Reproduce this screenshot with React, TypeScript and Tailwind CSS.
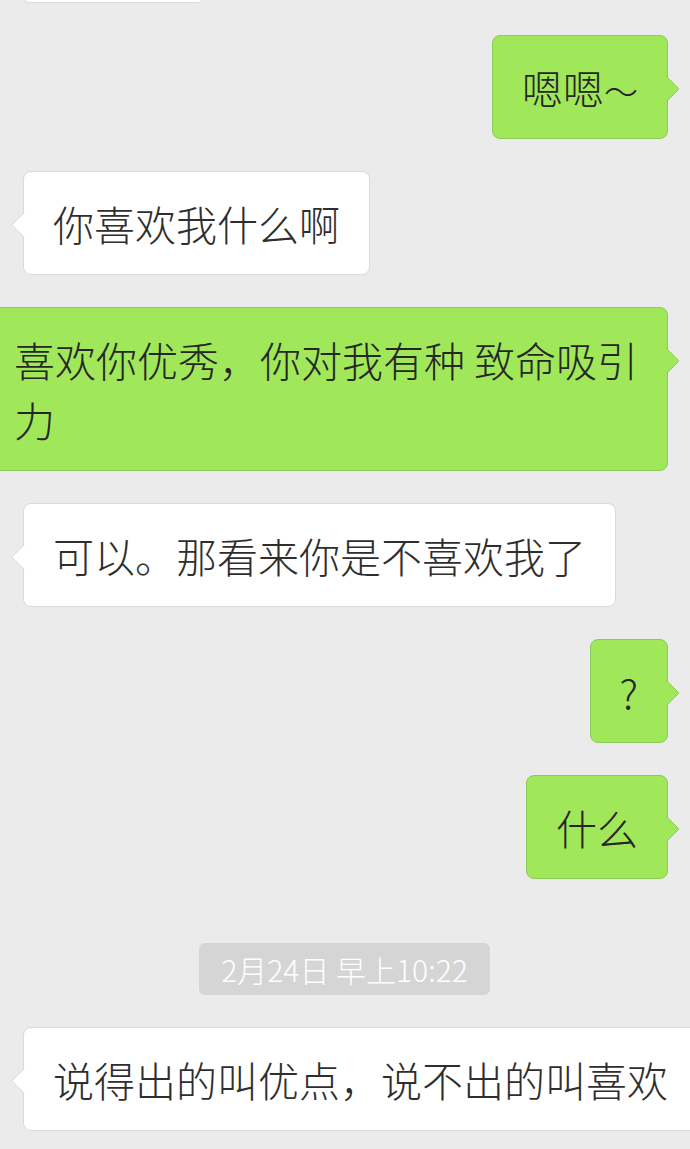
import React from "react"

const font = { fontFamily: '"Noto Sans CJK SC", "Noto Sans", sans-serif' }

function Tail({ side }: { side: "left" | "right" }) {
  if (side === "right") {
    return (
      <svg className="absolute top-[40px] left-[calc(100%-1px)]" width="14" height="26" viewBox="0 0 14 26">
        <path d="M0.5 0.5 L12.5 12.5 Q13 13 12.5 13.5 L0.5 25.5 Z" fill="#a0e75a" />
        <path d="M0.5 0.5 L12.5 12.5 Q13 13 12.5 13.5 L0.5 25.5" fill="none" stroke="#8ccb57" strokeWidth="1" />
      </svg>
    )
  }
  return (
    <svg className="absolute top-[40px] right-[calc(100%-1px)]" width="14" height="26" viewBox="0 0 14 26">
      <path d="M13.5 0.5 L1.5 12.5 Q1 13 1.5 13.5 L13.5 25.5 Z" fill="#ffffff" />
      <path d="M13.5 0.5 L1.5 12.5 Q1 13 1.5 13.5 L13.5 25.5" fill="none" stroke="#dadada" strokeWidth="1" />
    </svg>
  )
}

function Mine({ children }: { children: React.ReactNode }) {
  return (
    <div className="flex justify-end pr-[22px]">
      <div className="relative h-fit shrink-0 whitespace-nowrap rounded-[8px] border border-[#8ccb57] bg-[#a0e75a] px-[29px] py-[21px] text-[41px] font-light leading-[60px] text-[#262626]">
        {children}
        <Tail side="right" />
      </div>
    </div>
  )
}

function Theirs({ children }: { children: React.ReactNode }) {
  return (
    <div className="flex justify-start pl-[23px]">
      <div className="relative shrink-0 whitespace-nowrap rounded-[8px] border border-[#dadada] bg-white px-[29px] py-[21px] text-[41px] font-light leading-[60px] text-[#2e2e2e]">
        {children}
        <Tail side="left" />
      </div>
    </div>
  )
}

export default function App() {
  return (
    <div className="flex h-[1149px] w-[690px] flex-col gap-[32px] overflow-hidden bg-[#ebebeb]" style={font}>
      {/* previous message, scrolled off the top */}
      <div className="flex pl-[22px]">
        <div className="mt-[-101px] h-[104px] w-[183px] rounded-[8px] border border-[#dadada] bg-white" />
      </div>

      <Mine>
        嗯嗯<span className="text-[34px] leading-none">～</span>
      </Mine>
      <Theirs>你喜欢我什么啊</Theirs>
      <Mine>
        喜欢你优秀，你对我有种 致命吸引
        <br />力
      </Mine>
      <Theirs>可以。那看来你是不喜欢我了</Theirs>
      <Mine>?</Mine>
      <Mine>什么</Mine>

      {/* time divider */}
      <div className="mt-[32px] flex justify-center pr-[1px]">
        <div className="flex h-[52px] items-center rounded-[6px] bg-[#d5d5d5] px-[22px] text-[30px] font-light text-white">
          2月24日 早上10:22
        </div>
      </div>

      <Theirs>说得出的叫优点，说不出的叫喜欢</Theirs>
    </div>
  )
}
